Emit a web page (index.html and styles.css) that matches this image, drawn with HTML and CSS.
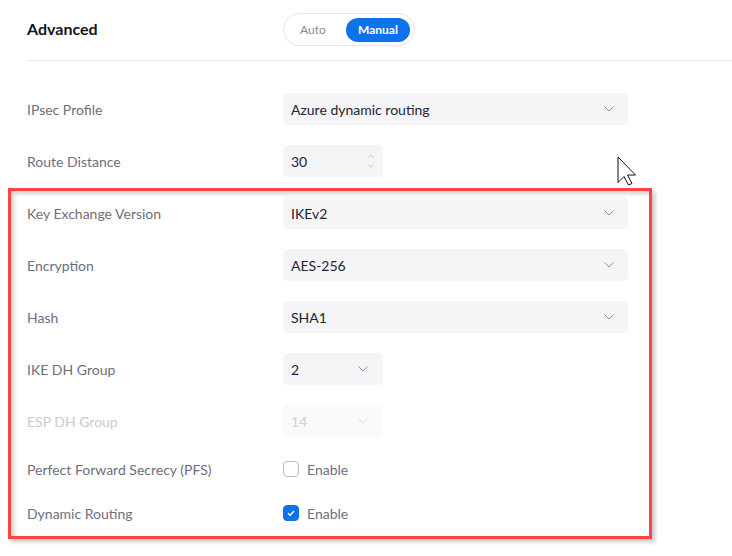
FILE: index.html
```html
<!DOCTYPE html>
<html lang="en">
<head>
<meta charset="utf-8">
<title>Advanced</title>
<link rel="stylesheet" href="styles.css">
</head>
<body>
<div class="page">
  <div class="header">
    <div class="title">Advanced</div>
    <div class="toggle">
      <span class="seg seg-auto">Auto</span>
      <span class="seg seg-on">Manual</span>
    </div>
  </div>

  <div class="section">
    <div class="row">
      <div class="label">IPsec Profile</div>
      <div class="select wide"><span>Azure dynamic routing</span><svg class="chev" viewBox="0 0 10 6"><path d="M0.5 0.5 L5 5 L9.5 0.5"/></svg></div>
    </div>
    <div class="row">
      <div class="label">Route Distance</div>
      <div class="select narrow"><span>30</span>
        <span class="spin">
          <svg viewBox="0 0 6 4"><path d="M0.5 3.5 L3 1 L5.5 3.5"/></svg>
          <svg viewBox="0 0 6 4"><path d="M0.5 0.5 L3 3 L5.5 0.5"/></svg>
        </span>
      </div>
    </div>
  </div>

  <div class="highlight">
    <div class="row">
      <div class="label">Key Exchange Version</div>
      <div class="select wide"><span>IKEv2</span><svg class="chev" viewBox="0 0 10 6"><path d="M0.5 0.5 L5 5 L9.5 0.5"/></svg></div>
    </div>
    <div class="row">
      <div class="label">Encryption</div>
      <div class="select wide"><span>AES-256</span><svg class="chev" viewBox="0 0 10 6"><path d="M0.5 0.5 L5 5 L9.5 0.5"/></svg></div>
    </div>
    <div class="row">
      <div class="label">Hash</div>
      <div class="select wide"><span>SHA1</span><svg class="chev" viewBox="0 0 10 6"><path d="M0.5 0.5 L5 5 L9.5 0.5"/></svg></div>
    </div>
    <div class="row">
      <div class="label">IKE DH Group</div>
      <div class="select narrow"><span>2</span><svg class="chev" viewBox="0 0 10 6"><path d="M0.5 0.5 L5 5 L9.5 0.5"/></svg></div>
    </div>
    <div class="row disabled">
      <div class="label">ESP DH Group</div>
      <div class="select narrow"><span>14</span><svg class="chev" viewBox="0 0 10 6"><path d="M0.5 0.5 L5 5 L9.5 0.5"/></svg></div>
    </div>
    <div class="row check-row">
      <div class="label">Perfect Forward Secrecy (PFS)</div>
      <label class="check"><span class="box"></span><span>Enable</span></label>
    </div>
    <div class="row check-row">
      <div class="label">Dynamic Routing</div>
      <label class="check"><span class="box on"><svg viewBox="0 0 16 16"><path d="M4.5 8.2 L7 10.6 L11.5 5.8"/></svg></span><span>Enable</span></label>
    </div>
  </div>

  <svg class="cursor" viewBox="0 0 20 30"><path d="M1 1 L1 26.5 L7 20.5 L11.5 29 L15 27.5 L10.5 19 L18.5 19 Z"/></svg>
</div>
</body>
</html>
```

FILE: styles.css
```css
* { box-sizing: border-box; }
html, body { margin: 0; padding: 0; background: #ffffff; }
body {
  font-family: Lato, "Noto Sans", sans-serif;
  color: #232333;
  width: 732px;
  height: 556px;
  overflow: hidden;
}
.page { position: relative; height: 556px; }

.header {
  display: grid;
  grid-template-columns: 256px auto;
  align-items: center;
  margin-left: 27px;
  padding-top: 13px;
  padding-bottom: 14px;
  border-bottom: 1px solid #ececf0;
}
.title { font-size: 16px; font-weight: 700; color: #131322; margin-top: -3px; }
.toggle {
  display: flex;
  align-items: center;
  width: 132px;
  height: 33px;
  padding: 0 4px;
  border: 1px solid #e4e4ea;
  border-radius: 17px;
  justify-self: start;
}
.seg {
  height: 24px;
  line-height: 24px;
  font-size: 12px;
  border-radius: 12px;
}
.seg-auto { width: 58px; padding-left: 12px; color: #8b8b98; }
.seg-on {
  width: 64px;
  text-align: center;
  background: #0e72ed;
  color: #ffffff;
  font-weight: 700;
}

.section {
  display: grid;
  row-gap: 20px;
  padding-left: 27px;
  margin-top: 32px;
}

.row {
  display: grid;
  grid-template-columns: 256px auto;
  align-items: center;
  height: 32px;
}
.label { font-size: 14px; color: #6e6e7e; }

.select {
  display: flex;
  align-items: center;
  justify-content: space-between;
  height: 32px;
  padding: 0 14px 0 8px;
  background: #f5f5f7;
  border-radius: 5px;
  font-size: 14px;
  color: #232333;
}
.select.wide { width: 345px; }
.select.narrow { width: 100px; padding-right: 15px; }
.chev { width: 10px; height: 6px; fill: none; stroke: #8c8c9c; stroke-width: 1; }
.spin { display: flex; flex-direction: column; gap: 6px; margin-right: -6px; }
.spin svg { width: 6px; height: 4px; fill: none; stroke: #c6c6cf; stroke-width: 1; }

.disabled .label { color: #c9c9d1; }
.disabled .select { background: #fafafb; color: #d0d0d7; }
.disabled .chev { stroke: #dcdce2; }

.highlight {
  display: grid;
  row-gap: 20px;
  margin: 11px 0 0 8px;
  width: 644px;
  padding: 6px 0 11px 16px;
  border: 3px solid #fd4444;
  box-shadow: 3px 3px 4px rgba(0, 0, 0, 0.22), inset 3px 3px 4px rgba(0, 0, 0, 0.18);
}
.check-row { height: 24px; }
.check {
  display: flex;
  align-items: center;
  gap: 8px;
  font-size: 14px;
  color: #6e6e7e;
}
.box {
  width: 16px;
  height: 16px;
  border: 1px solid #babac6;
  border-radius: 4px;
  background: #ffffff;
  display: flex;
}
.box.on { background: #0e72ed; border-color: #0e72ed; }
.box svg { width: 14px; height: 14px; fill: none; stroke: #ffffff; stroke-width: 1.6; }

.cursor {
  position: absolute;
  left: 617px;
  top: 156px;
  width: 20px;
  height: 30px;
  fill: #ffffff;
  stroke: #111111;
  stroke-width: 1;
  stroke-linejoin: miter;
}
```
